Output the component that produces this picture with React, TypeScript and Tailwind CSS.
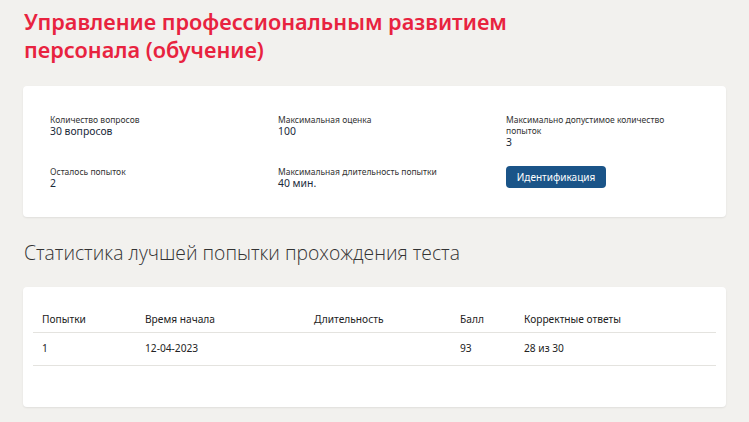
import React from "react";

const info = [
  { label: "Количество вопросов", value: "30 вопросов" },
  { label: "Максимальная оценка", value: "100" },
  { label: "Максимально допустимое количество попыток", value: "3" },
  { label: "Осталось попыток", value: "2" },
  { label: "Максимальная длительность попытки", value: "40 мин." },
];

const rows = [{ attempt: "1", start: "12-04-2023", duration: "", score: "93", correct: "28 из 30" }];

export default function App() {
  return (
    <div
      className="min-h-screen bg-[#f2f1ee] px-[23px] pt-[8px] pb-4"
      style={{ fontFamily: '"Noto Sans", "Open Sans", sans-serif' }}
    >
      {/* Header */}
      <h1 className="text-[21.7px] leading-[28px] font-semibold text-[#e8233f] pl-[1px] max-w-[520px]">
        Управление профессиональным развитием персонала (обучение)
      </h1>

      {/* Test info */}
      <div className="mt-[22px] bg-white rounded shadow-[0_1px_2px_rgba(0,0,0,0.08)] px-[27px] pt-[28px] pb-[27px]">
        <div className="grid grid-cols-[228px_228px_1fr] gap-y-[17px]">
          {info.map((item) => (
            <div key={item.label} className="max-w-[175px]">
              <p className="text-[8.5px] leading-[11px] text-[#333]">{item.label}</p>
              <p className="text-[10.4px] leading-[13px] text-[#1b2a3a]">{item.value}</p>
            </div>
          ))}
          <div>
            <button className="block h-[22px] w-[100px] bg-[#1a5488] text-white text-[10px] rounded">
              Идентификация
            </button>
          </div>
        </div>
      </div>

      {/* Stats */}
      <h2
        className="mt-[23px] pl-[1px] text-[19.3px] leading-[26px] font-light text-[#333]"
        style={{ fontFamily: '"Open Sans", "Noto Sans", sans-serif' }}
      >
        Статистика лучшей попытки прохождения теста
      </h2>

      <div className="mt-[21px] bg-white rounded shadow-[0_1px_2px_rgba(0,0,0,0.08)] px-[10px] pt-[20px] pb-[41px]">
        <table className="w-full text-[10.2px] text-[#222] border-collapse">
          <thead>
            <tr className="border-b border-[#e4e3df] h-[25px]">
              <th className="text-left font-normal pl-[9px] w-[112px]">Попытки</th>
              <th className="text-left font-normal w-[169px]">Время начала</th>
              <th className="text-left font-normal w-[146px]">Длительность</th>
              <th className="text-left font-normal w-[64px]">Балл</th>
              <th className="text-left font-normal">Корректные ответы</th>
            </tr>
          </thead>
          <tbody>
            {rows.map((r) => (
              <tr key={r.attempt} className="border-b border-[#e4e3df] h-[33px]">
                <td className="pl-[9px]">{r.attempt}</td>
                <td>{r.start}</td>
                <td>{r.duration}</td>
                <td>{r.score}</td>
                <td>{r.correct}</td>
              </tr>
            ))}
          </tbody>
        </table>
      </div>
    </div>
  );
}
